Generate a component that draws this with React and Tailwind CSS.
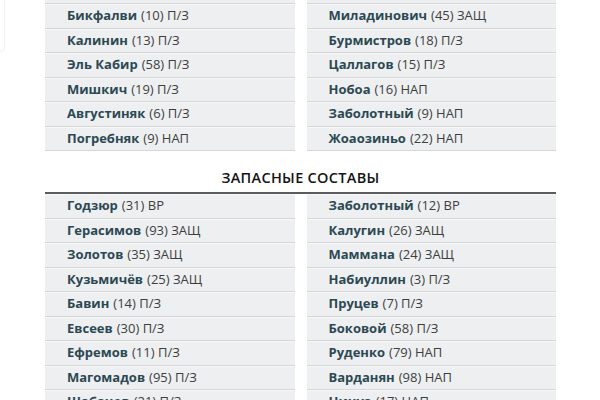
const osnova = [
  [null, null],
  [["Бикфалви", "(10)", "П/З"], ["Миладинович", "(45)", "ЗАЩ"]],
  [["Калинин", "(13)", "П/З"], ["Бурмистров", "(18)", "П/З"]],
  [["Эль Кабир", "(58)", "П/З"], ["Цаллагов", "(15)", "П/З"]],
  [["Мишкич", "(19)", "П/З"], ["Нобоа", "(16)", "НАП"]],
  [["Августиняк", "(6)", "П/З"], ["Заболотный", "(9)", "НАП"]],
  [["Погребняк", "(9)", "НАП"], ["Жоаозиньо", "(22)", "НАП"]],
];

const zapas = [
  [["Годзюр", "(31)", "ВР"], ["Заболотный", "(12)", "ВР"]],
  [["Герасимов", "(93)", "ЗАЩ"], ["Калугин", "(26)", "ЗАЩ"]],
  [["Золотов", "(35)", "ЗАЩ"], ["Маммана", "(24)", "ЗАЩ"]],
  [["Кузьмичёв", "(25)", "ЗАЩ"], ["Набиуллин", "(3)", "П/З"]],
  [["Бавин", "(14)", "П/З"], ["Пруцев", "(7)", "П/З"]],
  [["Евсеев", "(30)", "П/З"], ["Боковой", "(58)", "П/З"]],
  [["Ефремов", "(11)", "П/З"], ["Руденко", "(79)", "НАП"]],
  [["Магомадов", "(95)", "П/З"], ["Варданян", "(98)", "НАП"]],
  [["Шабанов", "(21)", "П/З"], ["Нинуа", "(17)", "НАП"]],
];

function Igrok({ data }) {
  return (
    <div className="h-[24.5px] flex items-center pl-[22px] bg-[#eeeff0] border-b border-[#d4d6d7] shadow-[inset_0_1px_0_#f8f8f8] text-[13px] leading-none">
      {data && (
        <>
          <span className="font-bold text-[#2c4953]">{data[0]}</span>
          <span className="ml-[4px] font-medium text-[#3c3f41]">
            {data[1]} {data[2]}
          </span>
        </>
      )}
    </div>
  );
}

function Sostav({ rows }) {
  return (
    <div className="grid grid-cols-2 gap-x-[12px]">
      {rows.map((r, i) => (
        <div key={i} className="contents">
          <Igrok data={r[0]} />
          <Igrok data={r[1]} />
        </div>
      ))}
    </div>
  );
}

export default function App() {
  return (
    <section
      className="relative w-[600px] h-[400px] overflow-hidden bg-white"
      style={{ fontFamily: '"Open Sans", "Noto Sans", sans-serif' }}
    >
      <div className="absolute left-0 top-0 w-[5px] h-[52px] border-r border-b border-[#eeeeee] rounded-br-[6px]"></div>

      <div className="ml-[45px] w-[511px] -mt-[20.5px]">
        <Sostav rows={osnova} />

        <div className="mt-[19px] pb-[6px] border-b-2 border-[#5a5c5e] text-center">
          <h2 className="text-[14.5px] leading-[16px] font-semibold text-[#151515] tracking-[0.3px]">
            ЗАПАСНЫЕ СОСТАВЫ
          </h2>
        </div>

        <Sostav rows={zapas} />
      </div>
    </section>
  );
}
